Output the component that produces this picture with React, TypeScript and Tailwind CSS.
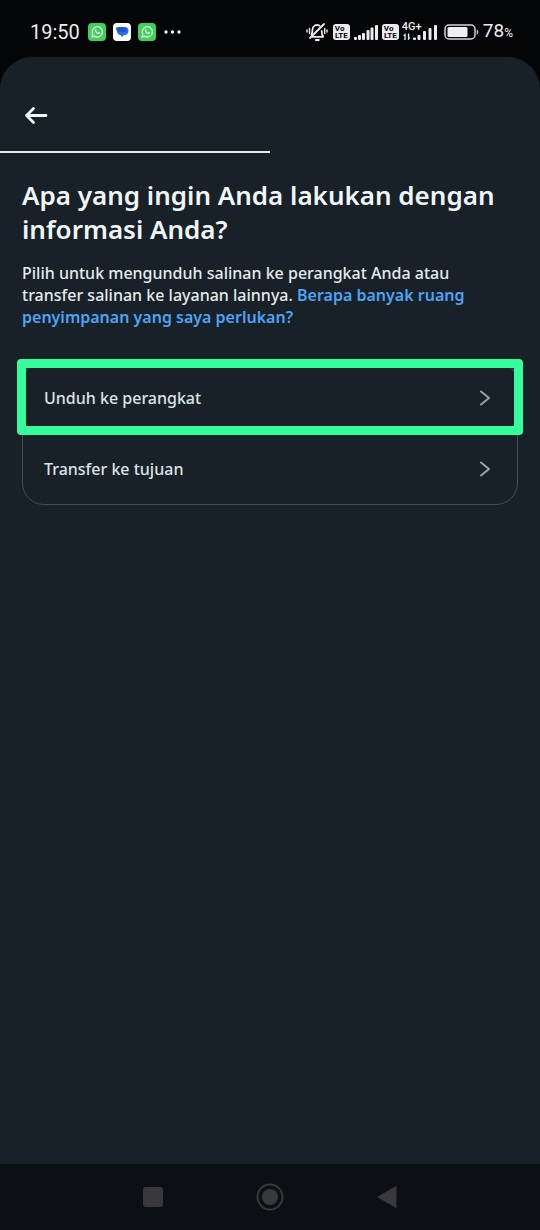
import React from "react";

function ChatIcon() {
  return (
    <svg viewBox="0 0 18 18" className="size-[18px]" aria-hidden="true">
      <rect width="18" height="18" rx="4" fill="#3fd15c" />
      <path d="M4 14l.8-2.800A5.100 5.100 0 1 1 6.700 13.200z" fill="none" stroke="#effff0" strokeWidth="1.200" strokeLinejoin="round" />
      <path d="M7.300 6.200c.5-.4.800-.1 1 .5.200.6.100.8-.2 1.200.4.900 1 1.400 1.900 1.800.5-.6.700-.7 1.200-.4.900.4.900.6.500 1.200-.7.900-2 .6-3.200-.3C7 9 6.300 7.300 7.300 6.200z" fill="#effff0" />
    </svg>
  );
}

function MessagesIcon() {
  return (
    <svg viewBox="0 0 18 18" className="size-[18px]" aria-hidden="true">
      <rect width="18" height="18" rx="4" fill="#fff" />
      <path d="M5 4h7a3.500 3.500 0 0 1 3.500 3.700c0 2.500-1.500 4.200-3.700 4.300h-1L8.800 14.600 8 12.200C5.500 12 4 10.500 3.900 8.300L3 6C2.600 4.800 3.500 4 5 4z" fill="#2f6fe6" />
      <path d="M5.500 4.500h5.500c1.700 0 2.500 1 2.500 2.200S12.700 9 11 9H6.500C5 9 4.300 8 4.300 6.800S4.800 4.500 5.500 4.500z" fill="#1f55cc" />
    </svg>
  );
}

function MutedBell() {
  return (
    <svg viewBox="0 0 22 20" className="h-5 w-[22px]" fill="none" stroke="#ececee" strokeWidth="1.800" strokeLinecap="round" strokeLinejoin="round" aria-hidden="true">
      <path d="M6.500 14.800h10.800c-1.300-1.500-1.600-2.800-1.600-5.800M13.500 3.700C10.500 1.700 6.500 3.900 6.500 7.500c0 2.300-.1 3.500-1 5" />
      <path d="M18 2L4 16" />
      <path d="M9.800 18h3" strokeWidth="2" />
      <path d="M3.500 6.500v5M18.700 6.500v5M1 8v2M21 8v2" strokeWidth="1.400" />
    </svg>
  );
}

function VolteBadge() {
  return (
    <span className="flex h-4 w-[17px] flex-col items-center justify-center rounded-[3px] bg-[#ececee] font-['Roboto',sans-serif] text-[8px] leading-[7px] font-bold text-black">
      <span className="self-start pl-[2px]">Vo</span>
      <span>LTE</span>
    </span>
  );
}

function SignalSix() {
  return (
    <svg viewBox="0 0 24 16" className="h-4 w-6" fill="#ececee" aria-hidden="true">
      <rect x="0" y="13" width="3" height="3" rx="1" />
      <rect x="4" y="11" width="3" height="5" rx="1" />
      <rect x="8" y="9" width="3" height="7" rx="1" />
      <rect x="12.500" y="6" width="3" height="10" rx="1" />
      <rect x="16.500" y="3.500" width="3" height="12.500" rx="1" />
      <rect x="21" y="1" width="3" height="15" rx="1" />
    </svg>
  );
}

function DataSignal() {
  return (
    <span className="relative block h-[18px] w-[36px]">
      <span className="absolute top-0 left-0 font-['Roboto',sans-serif] text-[11px] leading-[8px] font-medium">4G+</span>
      <svg viewBox="0 0 36 18" className="size-full" fill="#ececee" aria-hidden="true">
        <path d="M3 10.500L1 13h1.300v4h1.400v-6.500zM6.500 17l2-2.500H7.300v-4H5.900V17z" />
        <rect x="11" y="14.500" width="3" height="2.500" rx="1" />
        <rect x="15.500" y="12" width="3" height="5" rx="1" />
        <rect x="21" y="8" width="3" height="9" rx="1" />
        <rect x="26.500" y="5" width="3" height="12" rx="1" />
        <rect x="32" y="2" width="3" height="15" rx="1" />
      </svg>
    </span>
  );
}

function Battery() {
  return (
    <svg viewBox="0 0 35 16" className="h-4 w-[35px]" aria-hidden="true">
      <rect x="1" y="1" width="30" height="14" rx="4" fill="none" stroke="#d6d6d9" strokeWidth="1.500" />
      <rect x="3.500" y="3" width="20" height="10" rx="1.500" fill="#f0f0f2" />
      <path d="M32.800 5.500c2 .5 2 4.500 0 5z" fill="#d6d6d9" />
    </svg>
  );
}

function StatusBar() {
  return (
    <div className="flex h-[57px] items-center justify-between pt-[7px] pr-[27px] pl-[30px] font-['Roboto',sans-serif] text-[#ececee]">
      <div className="flex items-center">
        <span className="text-[20px] leading-6">19:50</span>
        <span className="ml-2 flex items-center gap-[7px]">
          <ChatIcon />
          <MessagesIcon />
          <ChatIcon />
        </span>
        <svg viewBox="0 0 18 4" className="ml-2 h-1 w-[18px]" fill="#ececee" aria-hidden="true">
          <circle cx="2" cy="2" r="1.700" />
          <circle cx="8.500" cy="2" r="1.700" />
          <circle cx="15" cy="2" r="1.700" />
        </svg>
      </div>
      <div className="flex items-center">
        <MutedBell />
        <span className="ml-[5px]"><VolteBadge /></span>
        <span className="ml-1"><SignalSix /></span>
        <span className="ml-1"><VolteBadge /></span>
        <span className="ml-[3px]"><DataSignal /></span>
        <span className="ml-[6px]"><Battery /></span>
        <span className="ml-1 text-[19px] leading-6">78<span className="text-[12px]">%</span></span>
      </div>
    </div>
  );
}

function Option({ label, highlighted = false }: { label: string; highlighted?: boolean }) {
  return (
    <li className="relative">
      <button type="button" className="flex h-[71px] w-full items-center justify-between pr-[26px] pl-[21px] text-left text-[16px] leading-6 font-medium text-[#dce3e7]">
        {label}
        <svg viewBox="0 0 12 16" className="h-4 w-3" fill="none" stroke="#98a2a8" strokeWidth="2" strokeLinecap="round" strokeLinejoin="round" aria-hidden="true">
          <path d="M2 1.500L10 8L2 14.500" />
        </svg>
      </button>
      {highlighted && (
        <span className="pointer-events-none absolute -inset-x-[6px] -top-[3px] -bottom-[2px] rounded-[4px] border-[9px] border-[#34fe9b]" />
      )}
    </li>
  );
}

export default function App() {
  return (
    <div className="flex min-h-screen flex-col bg-[#040506] font-['Noto_Sans',sans-serif]">
      <StatusBar />
      <main className="flex-1 rounded-t-[32px] bg-[#172127]">
        <div className="flex h-[94px] items-center px-6 pt-[22px]">
          <button type="button" aria-label="Kembali">
            <svg viewBox="0 0 24 20" className="h-5 w-6" fill="none" stroke="#f2f6f8" strokeWidth="2.800" strokeLinecap="round" strokeLinejoin="round" aria-hidden="true">
              <path d="M22 10.500H2.500M9.500 3.500L2.500 10.500l7 7" />
            </svg>
          </button>
        </div>
        <div className="h-[2px] w-1/2 bg-[#e4ebef]" />
        <div className="px-[22px] pt-[25px]">
          <h1 className="text-[26px] leading-[34px] font-semibold text-[#f0f5f8]">
            Apa yang ingin Anda lakukan dengan informasi Anda?
          </h1>
          <p className="mt-4 pr-10 text-[16px] leading-[22px] font-medium text-[#e4eaed]">
            Pilih untuk mengunduh salinan ke perangkat Anda atau transfer salinan ke layanan lainnya.{" "}
            <a href="#ruang" className="font-semibold text-[#4fa3f5]">
              Berapa banyak ruang penyimpanan yang saya perlukan?
            </a>
          </p>
          <ul className="mt-[33px] rounded-[22px] border border-[#414e5a]">
            <Option label="Unduh ke perangkat" highlighted />
            <Option label="Transfer ke tujuan" />
          </ul>
        </div>
      </main>
      <nav className="flex h-[66px] items-center justify-center gap-[93px] bg-[#0c0f13]">
        <button type="button" aria-label="Aplikasi terbaru">
          <svg viewBox="0 0 20 20" className="size-5" aria-hidden="true"><rect width="20" height="20" rx="3" fill="#39393b" /></svg>
        </button>
        <button type="button" aria-label="Beranda">
          <svg viewBox="0 0 28 28" className="size-7" aria-hidden="true">
            <circle cx="14" cy="14" r="12.500" fill="none" stroke="#39393b" strokeWidth="2" />
            <circle cx="14" cy="14" r="8" fill="#39393b" />
          </svg>
        </button>
        <button type="button" aria-label="Kembali ke layar sebelumnya">
          <svg viewBox="0 0 20 24" className="h-6 w-5" aria-hidden="true"><path d="M19 1.500v21L1 12z" fill="#39393b" stroke="#39393b" strokeLinejoin="round" /></svg>
        </button>
      </nav>
    </div>
  );
}
